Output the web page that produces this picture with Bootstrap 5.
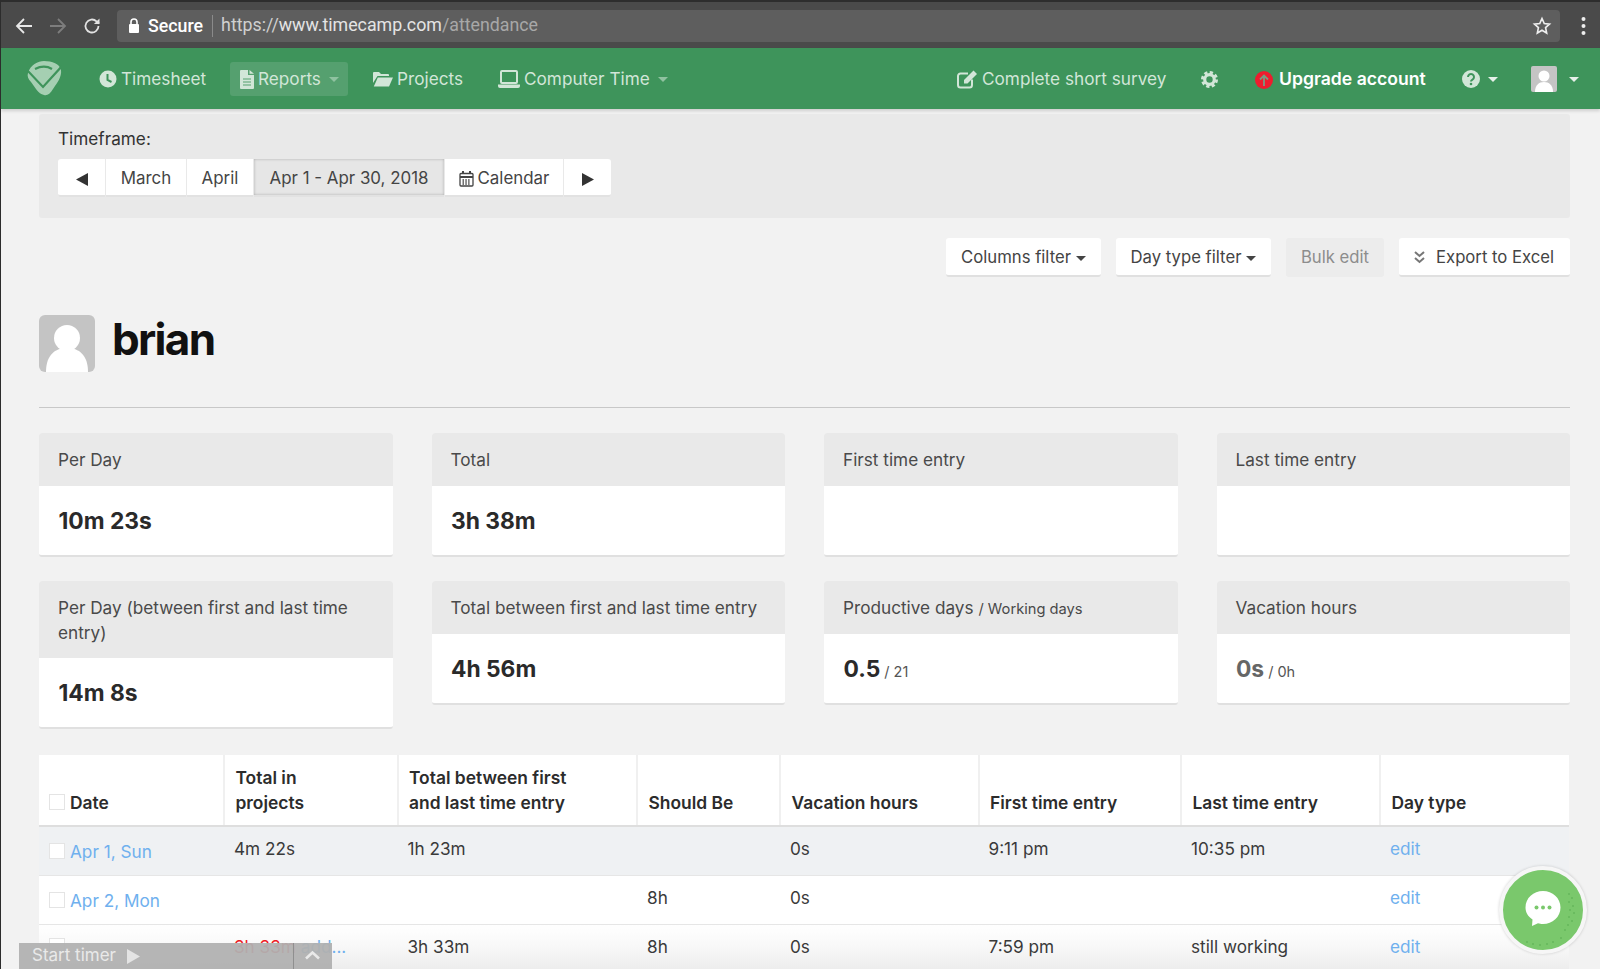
<!DOCTYPE html>
<html lang="en">
<head>
<meta charset="utf-8">
<title>TimeCamp attendance</title>
<link href="https://cdn.jsdelivr.net/npm/bootstrap@5.3.0/dist/css/bootstrap.min.css" rel="stylesheet">
<style>
html,body{height:100%;overflow:hidden}
body{background:#f2f2f2;font-family:Inter,"Liberation Sans",sans-serif;color:#3a3a3a;font-size:17.2px;border-left:1.5px solid #2c2c2c}
.chrome-bar{height:48px;background:#4a4a4a;border-top:2px solid #2d2d2d;padding:1px 0 0 14px;color:#fff}
.chrome-nav{width:102px;gap:0}
.chrome-nav svg{display:block}
.url-box{width:1443px;height:32px;background:#5e5e5e;border-radius:4px;padding:0 8px 0 11px;font-size:17.8px;font-family:"Roboto",Inter,sans-serif}
.url-sec{padding-right:9px;margin-right:8px;border-right:1px solid #8a8a8a;line-height:22px;margin-left:8px;font-weight:500}
.url-dim{color:#a8a8a8}
.url-host{color:#e4e4e4}
.url-proto{color:#d0d0d0}
.chrome-dots{margin-left:21px}
.tc-nav{height:61px;background:#3e945b;padding:1px 0 0 25px;box-shadow:0 2px 3px rgba(0,0,0,.15);color:#d2e6d8;position:relative;z-index:2;flex-wrap:nowrap;justify-content:flex-start}
.tc-item{color:#d2e6d8;text-decoration:none;display:flex;align-items:center;height:34px;white-space:nowrap}
.tc-pill{background:#55a06f;border-radius:3px;padding:0 10px;width:118px}
.tc-logo{width:36px;margin-right:37px;margin-top:-1px}
.tc-i1{width:131px}
.tc-i2{margin-right:25px}
.tc-i3{width:125px}
.tc-i4{width:202px}
.tc-i5{margin-left:257px;width:244px}
.tc-i6{width:54px}
.tc-i7{width:207px;color:#fff;font-weight:600;font-size:17.6px;padding-top:1px}
.tc-i8{width:69px}
.tc-item svg{flex:none}
.tc-gap{margin-right:4px}
.tc-gap-up{margin-right:6px}
.tc-caret{display:inline-block;width:0;height:0;border-left:5px solid transparent;border-right:5px solid transparent;border-top:5px solid #8fc2a0;margin-left:8px}
.tc-caret-w{border-top-color:#e6f0e9}
.tc-caret-far{margin-left:12px}
.tf-panel{background:#e9e9e9;border-radius:3px;height:104px;padding:12px 19px;margin-top:5px}
.tf-label{line-height:26px;color:#333;margin-bottom:7px}
.tf-group .btn{background:#fff;border:0;border-bottom:2px solid #e2e2e2;color:#444;font-size:16.9px;height:38px;padding:1px 0 0;margin-right:1px;border-radius:0;line-height:36px}
.tf-group .btn:first-child{border-radius:3px 0 0 3px}
.tf-group .btn:last-child{border-radius:0 3px 3px 0;margin-right:0}
.tf-group .tf-on{background:#e6e6e6;box-shadow:inset 0 0 3px rgba(0,0,0,.25)}
.w46{width:47px}.w80{width:80px}.w66{width:66px}.w190{width:190px}.w118{width:118px}
.act-row{margin-top:20px;gap:15px}
.act-btn{background:#fff;border:0;border-bottom:2px solid #e0e0e0;border-radius:3px;color:#444;font-size:16.7px;height:39px;padding:2px 0 0;white-space:nowrap}
.act-btn.disabled,.act-btn:disabled{background:#ececec;color:#8d8d8d;border-bottom-color:#ececec;opacity:1}
.act-1{width:155px}.act-2{width:155px}.act-3{width:98px}.act-4{width:171px}
.act-row .act-4{padding-left:14px;gap:10px}
.act-caret{display:inline-block;width:0;height:0;border-left:5px solid transparent;border-right:5px solid transparent;border-top:5px solid #444;margin-left:5px;vertical-align:2px}
.user-row{margin-top:38px;height:57px;gap:17px}
.user-name{font-size:44px;font-weight:700;color:#111;letter-spacing:-1.7px;margin:0 0 8px;line-height:49px}
.tc-rule{margin:35px 0 25px;border:0;border-top:1px solid #c8c8c8;opacity:1}
.stat-grid{display:grid;grid-template-columns:repeat(4,1fr);column-gap:39px;row-gap:24px;align-items:start}
.stat-card{border:0;border-bottom:2px solid #e0e0e0;border-radius:3px;background:#fff;--bs-card-border-width:0}
.stat-card .card-header{background:#e9e9e9;border:0;padding:14px 20px 11px 19px;line-height:25px;border-radius:3px 3px 0 0;color:#4a4a4a;height:53px}
.stat-card .tall{height:77px}
.stat-card .card-body{padding:1px 19px 0 19.500px;height:69px;display:flex;align-items:center;font-size:22.8px;font-weight:700;color:#2a2a2a}
.stat-card .stat-mute{color:#666}
.stat-sm{font-size:14.5px;font-weight:400;color:#555;margin-left:4px;margin-top:5px}
.stat-hsm{font-size:14.700px}
.att-wrap{margin-top:26px}
.att-table{table-layout:fixed;width:1530px;margin:0;--bs-table-bg:transparent;background:#fff;color:#3a3a3a}
.att-table th{font-weight:600;line-height:25px;padding:9px 11px 10px 10.500px;vertical-align:bottom;border-right:2px solid #f0f0f0;border-bottom:2px solid #dedede;color:#2c2c2c;height:71px;font-size:17.4px}
.att-table th:last-child{border-right:0}
.att-table td{padding:9px 10px 0;height:49px;border-bottom:1px solid #e6e6e6;line-height:25px;vertical-align:top;white-space:nowrap;overflow:hidden}
.att-table th:first-child,.att-table td:first-child{padding-left:10px;padding-right:0}
.row-alt td{background:#eff1f3}
.row-fade td{background:linear-gradient(to bottom,#fff,#f7f7f7 50%,#ebebeb)}
.c1{width:185px}.c2{width:173.5px}.c3{width:239.5px}.c4{width:143px}.c5{width:198.5px}.c6{width:202.5px}.c7{width:199px}.c8{width:189px}
.chk{display:inline-block;width:16px;height:16px;background:#fff;border:1px solid #e4e4e4;margin-right:5px;vertical-align:-1px}
.date-cell{position:relative;top:3px}
.tc-link{color:#6fb0ee;text-decoration:none}
.tc-red{color:#ee1c25}
.timer-bar{position:absolute;left:19px;bottom:0;width:313px;height:26px;background:rgba(176,176,176,.94);color:#e9e9e9;z-index:4;padding-left:13px;font-size:17px}
.timer-play{margin-left:11px}
.timer-sep{position:absolute;left:274px;top:0;bottom:0;border-left:1px solid #8f8f8f}
.timer-up{position:absolute;left:286px;top:7px}
.chat-btn{position:absolute;left:1499px;top:866px;width:88px;height:88px;border-radius:50%;background:#7ac86c;border:4px solid #f6f6f6;box-shadow:0 0 3px rgba(0,0,0,.18);z-index:5}
.chat-btn svg{display:block}
.main-wrap{padding:0 30px 0 38px}
</style>
</head>
<body>
<div class="chrome-bar d-flex align-items-center">
  <div class="chrome-nav d-flex align-items-center">
    <svg width="18" height="18" viewBox="0 0 18 18" class="me-3" fill="none" stroke="#e8e8e8" stroke-width="1.8"><path d="M17 9H2M9 2 2 9l7 7"/></svg>
    <svg width="18" height="18" viewBox="0 0 18 18" class="me-3" fill="none" stroke="#7d7d7d" stroke-width="1.8"><path d="M1 9h15M9 2l7 7-7 7"/></svg>
    <svg width="18" height="18" viewBox="0 0 18 18" fill="none" stroke="#e2e2e2" stroke-width="1.8"><path d="M15.500 9a6.500 6.500 0 1 1-2-4.700L16 6.500"/><path d="M16.500 1.500v5.600h-5.600z" fill="#e2e2e2" stroke="none"/></svg>
  </div>
  <div class="url-box d-flex align-items-center">
    <svg width="12" height="15" viewBox="0 0 12 15" fill="#fff"><rect x="1" y="6" width="10" height="9" rx="1"/><path d="M3 6V4a3 3 0 0 1 6 0v2" fill="none" stroke="#fff" stroke-width="1.6"/></svg>
    <span class="url-sec">Secure</span>
    <span><span class="url-proto">https://</span><span class="url-host">www.timecamp.com</span><span class="url-dim">/attendance</span></span>
    <svg class="ms-auto" width="20" height="20" viewBox="0 0 24 24" fill="none" stroke="#eee" stroke-width="2"><path d="m12 3 2.700 6 6.300.7-4.700 4.300 1.300 6.500-5.600-3.300-5.600 3.300 1.300-6.500L3 9.700l6.300-.7z"/></svg>
  </div>
  <svg class="chrome-dots" width="5" height="20" viewBox="0 0 5 20" fill="#eee"><circle cx="2.500" cy="3" r="2"/><circle cx="2.500" cy="10" r="2"/><circle cx="2.500" cy="17" r="2"/></svg>
</div>

<nav class="navbar tc-nav">
  <svg class="tc-logo" height="36" viewBox="0 0 36 36"><path d="M2 12C4 4 12 0 18 0c8 0 16 3 17 9 1 7-4 13-8 19-3 5-6 7-9 6-6-1-9-8-13-13-3-3-4-6-3-9z" fill="#a5cfb2"/><path d="M0 8 17 26 36 5M9 8c6-3 12-3 17 0" fill="none" stroke="#3e945b" stroke-width="2.200"/></svg>
  <a class="tc-item tc-i1" href="#"><svg class="tc-gap" width="18" height="18" viewBox="0 0 18 18"><circle cx="9" cy="9" r="8.500" fill="#d2e6d8"/><path d="M8.500 4v6l4 2" fill="none" stroke="#3e945b" stroke-width="2"/></svg>Timesheet</a>
  <a class="tc-item tc-pill tc-i2" href="#"><svg class="tc-gap" width="14" height="19" viewBox="0 0 14 19"><path d="M0 1a1 1 0 0 1 1-1h7v5h6v13a1 1 0 0 1-1 1H1a1 1 0 0 1-1-1zM9.500 0 14 3.800H9.500z" fill="#d2e6d8"/><path d="M3 9h8M3 12h8M3 15h8" stroke="#55a06f" stroke-width="1.200"/></svg>Reports<span class="tc-caret"></span></a>
  <a class="tc-item tc-i3" href="#"><svg class="tc-gap" width="20" height="16" viewBox="0 0 20 16"><path d="M0 2a1 1 0 0 1 1-1h5l2 2h7a1 1 0 0 1 1 1v1H4.500L0 12z" fill="#d2e6d8"/><path d="M4.800 6.500H20l-4 9H.8z" fill="#d2e6d8"/></svg>Projects</a>
  <a class="tc-item tc-i4" href="#"><svg class="tc-gap" width="22" height="18" viewBox="0 0 22 18"><rect x="3" y="1" width="16" height="12" rx="1" fill="none" stroke="#d2e6d8" stroke-width="2"/><path d="M0 14.500h22V16a2 2 0 0 1-2 2H2a2 2 0 0 1-2-2z" fill="#d2e6d8"/></svg>Computer Time<span class="tc-caret"></span></a>
  <a class="tc-item tc-i5" href="#"><svg class="tc-gap" width="21" height="19" viewBox="0 0 21 19"><path d="M15 9.500V15a2.500 2.500 0 0 1-2.500 2.500H3.500A2.500 2.500 0 0 1 1 15V6a2.500 2.500 0 0 1 2.500-2.500H11" fill="none" stroke="#d2e6d8" stroke-width="2"/><path d="M7 10 16.500.5 20 4l-9.500 9.500H7z" fill="#d2e6d8"/></svg>Complete short survey</a>
  <a class="tc-item tc-i6" href="#" aria-label="Settings"><svg width="17" height="17" viewBox="0 0 17 17" fill="none"><circle cx="8.500" cy="8.500" r="4.800" stroke="#d2e6d8" stroke-width="3.200"/><circle cx="8.500" cy="8.500" r="7" stroke="#d2e6d8" stroke-width="3" stroke-dasharray="3.200 2.300"/></svg></a>
  <a class="tc-item tc-i7" href="#"><svg class="tc-gap-up" width="18" height="18" viewBox="0 0 18 18"><circle cx="9" cy="9" r="9" fill="#ee1c2e"/><path d="M9 15V5M5 8.500l4-4 4 4" fill="none" stroke="#7a9a80" stroke-width="1.800"/></svg>Upgrade account</a>
  <a class="tc-item tc-i8" href="#" aria-label="Help"><svg width="18" height="18" viewBox="0 0 18 18"><circle cx="9" cy="9" r="9" fill="#d2e6d8"/><path d="M6 7a3 3 0 1 1 4.500 2.600C9.500 10.200 9 10.600 9 11.500" fill="none" stroke="#3e945b" stroke-width="2"/><circle cx="9" cy="14" r="1.300" fill="#3e945b"/></svg><span class="tc-caret tc-caret-w"></span></a>
  <a class="tc-item" href="#" aria-label="Account"><svg width="26" height="26" viewBox="0 0 26 26"><rect width="26" height="26" rx="2" fill="#c4c4c4"/><circle cx="13" cy="10" r="5.500" fill="#fff"/><path d="M4 26c0-7 4-10 9-10s9 3 9 10z" fill="#fff"/></svg><span class="tc-caret tc-caret-w tc-caret-far"></span></a>
</nav>

<main class="main-wrap">
  <section class="tf-panel">
    <div class="tf-label">Timeframe:</div>
    <div class="tf-group d-flex">
      <button class="btn w46" aria-label="Previous"><svg width="12" height="13" viewBox="0 0 12 13" fill="#333"><path d="M12 0v13L0 6.500z"/></svg></button>
      <button class="btn w80">March</button>
      <button class="btn w66">April</button>
      <button class="btn w190 tf-on">Apr 1 - Apr 30, 2018</button>
      <button class="btn w118"><svg width="15" height="16" viewBox="0 0 15 16" fill="none" stroke="#444" stroke-width="1.300" class="me-1"><rect x="1" y="2.500" width="13" height="12.500" rx="1"/><path d="M1 6h13" stroke-width="2"/><path d="M4 0v3M11 0v3" stroke-width="2"/><path d="M3.500 9h8M3.500 11h8M3.500 13h8" stroke-dasharray="1.500 1.300"/></svg>Calendar</button>
      <button class="btn w46" aria-label="Next"><svg width="12" height="13" viewBox="0 0 12 13" fill="#333"><path d="M0 0v13l12-6.500z"/></svg></button>
    </div>
  </section>

  <div class="act-row d-flex justify-content-end">
    <button class="btn act-btn act-1">Columns filter<span class="act-caret"></span></button>
    <button class="btn act-btn act-2">Day type filter<span class="act-caret"></span></button>
    <button class="btn act-btn act-3" disabled>Bulk edit</button>
    <button class="btn act-btn act-4 d-flex align-items-center"><svg width="13" height="15" viewBox="0 0 13 15" fill="none" stroke="#777" stroke-width="2"><path d="m2 2 4.500 4L11 2M2 8l4.500 4L11 8"/></svg>Export to Excel</button>
  </div>

  <div class="user-row d-flex align-items-center">
    <svg width="56" height="57" viewBox="0 0 56 57"><rect width="56" height="57" rx="6" fill="#c4c4c4"/><circle cx="28" cy="23" r="13" fill="#fff"/><path d="M7 57c0-17 9-24 21-24s21 7 21 24z" fill="#fff"/></svg>
    <h1 class="user-name">brian</h1>
  </div>

  <hr class="tc-rule">

  <div class="stat-grid">
    <div class="card stat-card"><div class="card-header">Per Day</div><div class="card-body">10m 23s</div></div>
    <div class="card stat-card"><div class="card-header">Total</div><div class="card-body">3h 38m</div></div>
    <div class="card stat-card"><div class="card-header">First time entry</div><div class="card-body"></div></div>
    <div class="card stat-card"><div class="card-header">Last time entry</div><div class="card-body"></div></div>
    <div class="card stat-card"><div class="card-header tall">Per Day (between first and last time entry)</div><div class="card-body">14m 8s</div></div>
    <div class="card stat-card"><div class="card-header">Total between first and last time entry</div><div class="card-body">4h 56m</div></div>
    <div class="card stat-card"><div class="card-header">Productive days <span class="stat-hsm">/ Working days</span></div><div class="card-body">0.5<span class="stat-sm">/ 21</span></div></div>
    <div class="card stat-card"><div class="card-header">Vacation hours</div><div class="card-body stat-mute">0s<span class="stat-sm">/ 0h</span></div></div>
  </div>

  <div class="att-wrap">
    <table class="table att-table">
      <colgroup><col class="c1"><col class="c2"><col class="c3"><col class="c4"><col class="c5"><col class="c6"><col class="c7"><col class="c8"></colgroup>
      <thead>
        <tr><th><span class="chk"></span>Date</th><th>Total in<br>projects</th><th>Total between first<br>and last time entry</th><th>Should Be</th><th>Vacation hours</th><th>First time entry</th><th>Last time entry</th><th>Day type</th></tr>
      </thead>
      <tbody>
        <tr class="row-alt"><td><span class="date-cell"><span class="chk"></span><a class="tc-link" href="#">Apr 1, Sun</a></span></td><td>4m 22s</td><td>1h 23m</td><td></td><td>0s</td><td>9:11 pm</td><td>10:35 pm</td><td><a class="tc-link" href="#">edit</a></td></tr>
        <tr><td><span class="date-cell"><span class="chk"></span><a class="tc-link" href="#">Apr 2, Mon</a></span></td><td></td><td></td><td>8h</td><td>0s</td><td></td><td></td><td><a class="tc-link" href="#">edit</a></td></tr>
        <tr class="row-fade"><td><span class="chk"></span></td><td><span class="tc-red">3h 33m</span> <a class="tc-link" href="#">add...</a></td><td>3h 33m</td><td>8h</td><td>0s</td><td>7:59 pm</td><td>still working</td><td><a class="tc-link" href="#">edit</a></td></tr>
      </tbody>
    </table>
  </div>
</main>

<div class="timer-bar d-flex align-items-center">Start timer<svg class="timer-play" width="13" height="15" viewBox="0 0 13 15" fill="#e4e4e4"><path d="M0 0v15l13-7.500z"/></svg><span class="timer-sep"></span><svg class="timer-up" width="15" height="10" viewBox="0 0 15 10" fill="none" stroke="#e9e9e9" stroke-width="2.600"><path d="m1 8.500 6.500-6 6.500 6"/></svg></div>
<button class="chat-btn btn p-0" aria-label="Chat">
  <svg width="80" height="80" viewBox="0 0 80 80"><g fill="#4fa348"><circle cx="66" cy="24" r=".7"/><circle cx="69" cy="28" r=".7"/><circle cx="66" cy="32" r=".7"/><circle cx="70" cy="36" r=".7"/><circle cx="67" cy="40" r=".7"/><circle cx="71" cy="43" r=".7"/><circle cx="66" cy="47" r=".7"/><circle cx="69" cy="51" r=".7"/><circle cx="65" cy="55" r=".7"/><circle cx="62" cy="60" r=".7"/><circle cx="58" cy="68" r=".7"/><circle cx="50" cy="72" r=".7"/><circle cx="44" cy="74" r=".7"/><circle cx="37" cy="75" r=".7"/><circle cx="30" cy="74" r=".7"/><circle cx="24" cy="72" r=".7"/></g><path d="M40 21c9.500 0 17.500 7 17.500 16.500S49.500 54 40 54c-2 0-3.500-.2-5-.7L29 56l.5-6.500C25 46.500 22.500 42.500 22.500 37.500 22.500 28 30.500 21 40 21z" fill="#fff"/><circle cx="33.500" cy="37.500" r="2" fill="#7ac86c"/><circle cx="40" cy="37.500" r="2" fill="#7ac86c"/><circle cx="46.500" cy="37.500" r="2" fill="#7ac86c"/></svg>
</button>
<script src="https://cdn.jsdelivr.net/npm/bootstrap@5.3.0/dist/js/bootstrap.bundle.min.js"></script>
</body>
</html>
